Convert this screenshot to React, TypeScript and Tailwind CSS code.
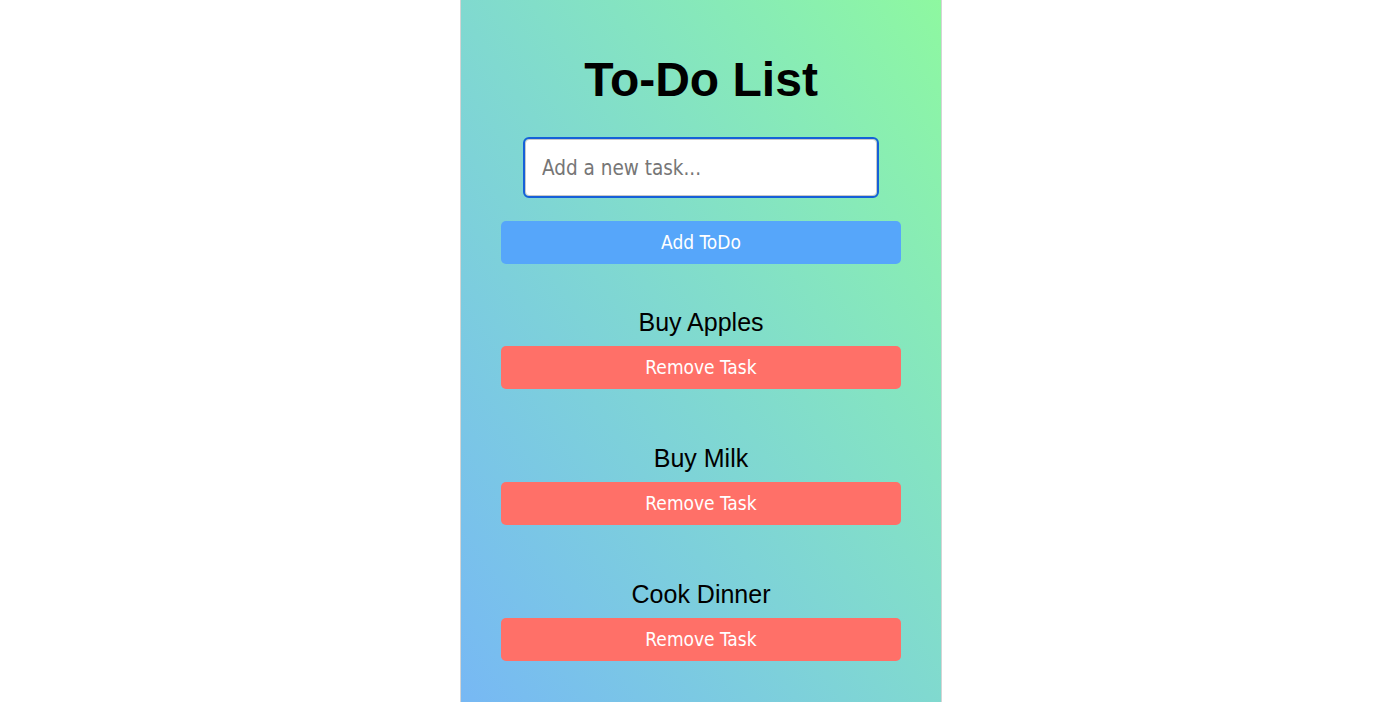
import { useState } from "react";

const initialTasks = ["Buy Apples", "Buy Milk", "Cook Dinner"];

export default function App() {
  const [tasks, setTasks] = useState<string[]>(initialTasks);
  const [text, setText] = useState("");

  const addTask = () => {
    if (text.trim().length === 0) return;
    setTasks([...tasks, text.trim()]);
    setText("");
  };

  const removeTask = (index: number) => {
    setTasks(tasks.filter((_, i) => i !== index));
  };

  return (
    <div className="min-h-screen bg-white flex justify-center pl-[2px] font-['Liberation_Sans',Arial,sans-serif]">
      <div className="w-[482px] min-h-screen border-x border-[#d4d4d4] bg-linear-to-tr from-[#77b8f4] to-[#8ef8a0] flex flex-col items-center pt-[52px] pb-10">
        <h1 className="h-[55px] leading-[55px] text-[48px] font-bold text-black">
          To-Do List
        </h1>
        <input
          type="text"
          value={text}
          onChange={(e) => setText(e.target.value)}
          placeholder="Add a new task..."
          className="mt-[32px] w-[352px] h-[57px] px-4 bg-white rounded-[4px] border border-[#c8c8c8] outline-2 outline-[#1560d8] text-[20.5px] text-black placeholder:text-[#767676] font-['DejaVu_Sans_Condensed','DejaVu_Sans',sans-serif]"
        />
        <button
          onClick={addTask}
          className="mt-[25px] w-[400px] h-[43px] rounded-[5px] bg-[#56a6fa] text-white text-[19px] font-['DejaVu_Sans_Condensed','DejaVu_Sans',sans-serif]"
        >
          Add ToDo
        </button>
        <ul className="mt-[44px] flex flex-col gap-[55px]">
          {tasks.map((task, i) => (
            <li key={task + i} className="flex flex-col items-center">
              <span className="h-[28px] leading-[28px] text-[25px] text-black">
                {task}
              </span>
              <button
                onClick={() => removeTask(i)}
                className="mt-[10px] w-[400px] h-[43px] rounded-[5px] bg-[#ff7068] text-white text-[19px] font-['DejaVu_Sans_Condensed','DejaVu_Sans',sans-serif]"
              >
                Remove Task
              </button>
            </li>
          ))}
        </ul>
      </div>
    </div>
  );
}
